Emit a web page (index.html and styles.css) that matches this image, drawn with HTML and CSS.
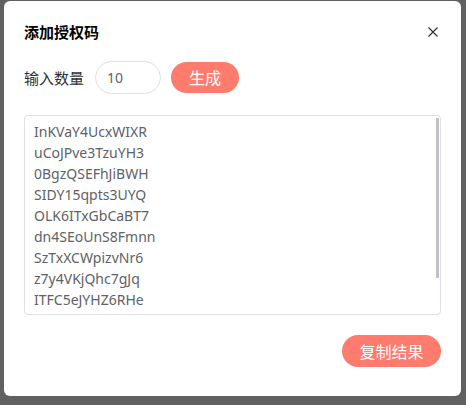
FILE: index.html
```html
<!DOCTYPE html>
<html lang="zh">
<head>
<meta charset="utf-8">
<title>添加授权码</title>
<link rel="stylesheet" href="styles.css">
</head>
<body>
<div class="dialog">
  <div class="header">
    <span class="title">添加授权码</span>
    <svg class="close" width="12" height="12" viewBox="0 0 12 12"><path d="M1.5 1.5 L10.5 10.5 M10.5 1.5 L1.5 10.5" stroke="#303133" stroke-width="1.2" fill="none"/></svg>
  </div>
  <div class="row">
    <span class="label">输入数量</span>
    <div class="input">10</div>
    <button class="btn small">生成</button>
  </div>
  <div class="result-wrap">
    <div class="result">InKVaY4UcxWIXR
uCoJPve3TzuYH3
0BgzQSEFhJiBWH
SIDY15qpts3UYQ
OLK6ITxGbCaBT7
dn4SEoUnS8Fmnn
SzTxXCWpizvNr6
z7y4VKjQhc7gJq
ITFC5eJYHZ6RHe
LQEHMxqNB3SIB</div>
    <div class="thumb"></div>
  </div>
  <div class="footer">
    <button class="btn">复制结果</button>
  </div>
</div>
</body>
</html>
```
FILE: styles.css
```css
html, body {
  margin: 0;
  padding: 0;
  background: #616161;
  height: 405px;
  overflow: hidden;
  font-family: "Noto Sans", "Noto Sans CJK SC", sans-serif;
}
.dialog {
  margin: 1px 0 0 4px;
  width: 457px;
  height: 395px;
  background: #fff;
  border-radius: 6px;
  box-sizing: border-box;
  padding: 19px 20px 0 20px;
  display: flex;
  flex-direction: column;
}
.header {
  display: flex;
  align-items: center;
  justify-content: space-between;
  height: 22px;
}
.title {
  font-family: "Noto Sans CJK SC", sans-serif;
  font-size: 15px;
  font-weight: bold;
  color: #000;
}
.close {
  margin-right: 2px;
  margin-top: 2px;
}
.row {
  display: flex;
  align-items: center;
  margin-top: 19px;
}
.label {
  font-family: "Noto Sans CJK SC", sans-serif;
  font-size: 15px;
  color: #303133;
}
.input {
  margin-left: 11px;
  width: 66px;
  height: 33px;
  box-sizing: border-box;
  border: 1px solid #dcdfe6;
  border-radius: 17px;
  padding-left: 11px;
  font-size: 14px;
  line-height: 31px;
  color: #606266;
}
.btn {
  border: none;
  background: #ff7b6d;
  color: #fff;
  font-family: "Noto Sans CJK SC", sans-serif;
  font-size: 16px;
  height: 32px;
  width: 99px;
  border-radius: 16px;
  padding: 0;
  line-height: 32px;
}
.btn.small {
  margin-left: 10px;
  width: 68px;
  height: 31px;
  line-height: 31px;
}
.result-wrap {
  position: relative;
  margin-top: 21px;
  width: 417px;
  height: 200px;
}
.result {
  width: 100%;
  height: 100%;
  box-sizing: border-box;
  border: 1px solid #dcdfe6;
  border-radius: 4px;
  padding: 5px 10px 0 9px;
  font-family: "Noto Sans", sans-serif;
  font-size: 14px;
  line-height: 21px;
  color: #606266;
  white-space: pre;
  overflow: hidden;
}
.thumb {
  position: absolute;
  right: 2px;
  top: 3px;
  width: 3px;
  height: 160px;
  background: #c1c1c1;
}
.footer {
  display: flex;
  justify-content: flex-end;
  margin-top: 20px;
}
```
